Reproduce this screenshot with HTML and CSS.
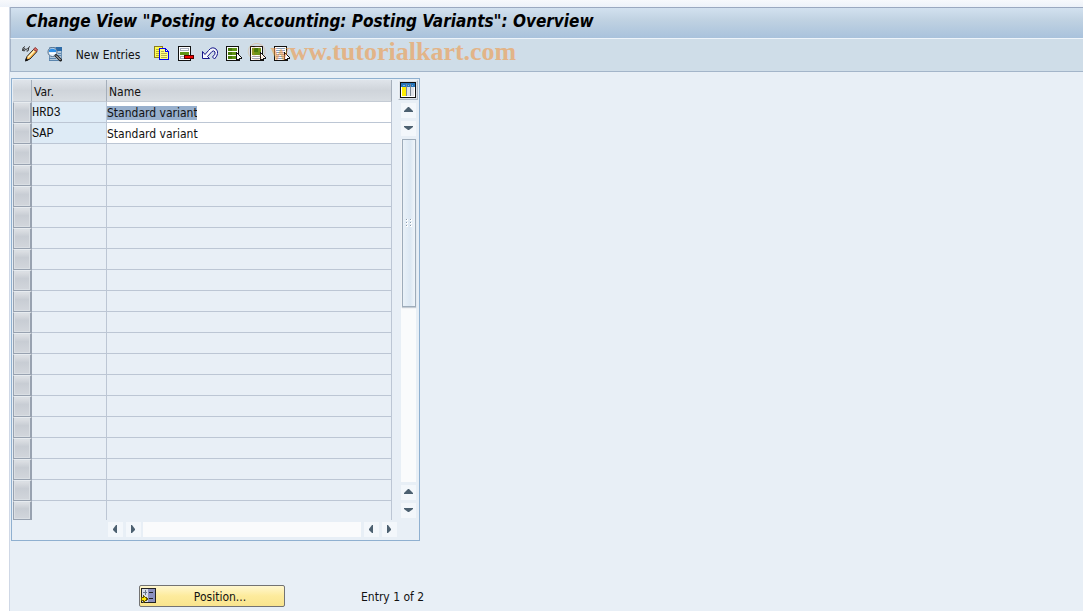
FILE: index.html
```html
<!DOCTYPE html>
<html lang="en">
<head>
    <meta charset="UTF-8">
    <meta name="viewport" content="width=device-width, initial-scale=1.0">
    <title>Change View "Posting to Accounting: Posting Variants": Overview</title>
    <link rel="stylesheet" href="styles.css">
</head>
<body>
    <div class="window">
        <header class="title-bar">
            <h1>Change View "Posting to Accounting: Posting Variants": Overview</h1>
        </header>

        <nav class="toolbar">
            <button class="tool" aria-label="Display / Change">
                <svg viewBox="0 0 16 16">
                    <path d="M.5 4.500Q.5 1 3 .5M.5 4.500Q2 1.500 3.500 3Q3 6 .5 4.500M4 3.500Q5.500 2 6.500 3Q6.500 6 4.500 5M6.500 3Q6 1 8 .5" fill="none" stroke="#333"/>
                    <path d="M3.500 14.500L5 10.500L12 3L15 5.500L8 13Z" fill="#ffb84a" stroke="#222"/>
                    <path d="M6 11.500L12.500 4.500" stroke="#fff6c8" stroke-width="1.500"/>
                    <path d="M11.500 3.500L13 1.500L15.500 3.500L14.500 5.500Z" fill="#e8736e" stroke="#8c3a36"/>
                    <path d="M3 15.500L4 12L6.500 14.500Z" fill="#111"/>
                </svg>
            </button>
            <button class="tool" aria-label="Details">
                <svg viewBox="0 0 16 16">
                    <path d="M3.500 1.500H15.500V14.500H3.500Z" fill="#b4c8da" stroke="#6d92b5"/>
                    <path d="M10 1H16V5H10Z" fill="#2e6ca8"/>
                    <path d="M12 7.500H15M12 9.500H15M3 12.500H10M3 14.500H12" stroke="#5c86ae"/>
                    <circle cx="6.500" cy="6" r="4.500" fill="#e4f1fc" stroke="#4f6b88"/>
                    <path d="M3 4Q6 1 10 4V6H3Z" fill="#2f8fe6"/>
                    <path d="M4 7.500H9" stroke="#fff"/>
                    <path d="M10 9.500L14.500 14" stroke="#222" stroke-width="3" stroke-linecap="round"/>
                    <path d="M10 9.500L14.500 14" stroke="#e8edf2"/>
                </svg>
            </button>
            <button class="new-entries">New Entries</button>
            <button class="tool" aria-label="Copy As">
                <svg viewBox="0 0 16 16" shape-rendering="crispEdges">
                    <path d="M.5 .5H8.500V11.500H.5Z" fill="#ffff50" stroke="#8a7a20"/>
                    <path d="M2 3.500H5M2 5.500H5M2 7.500H5M2 9.500H5" stroke="#b9a83a"/>
                    <path d="M5.500 2.500H11.500L14.500 5.500V13.500H5.500Z" fill="#ffff80" stroke="#0000f0"/>
                    <path d="M11.500 2.500V5.500H14.500Z" fill="#fff" stroke="#0000f0"/>
                    <path d="M7 5.500H10M7 7.500H13M7 9.500H13M7 11.500H13" stroke="#b9b050"/>
                </svg>
            </button>
            <button class="tool" aria-label="Delete">
                <svg viewBox="0 0 16 16" shape-rendering="crispEdges">
                    <path d="M.5 .5H12.500V14.500H.5Z" fill="#fff" stroke="#111"/>
                    <path d="M2 2H11V5H2ZM2 10H11V13H2Z" fill="#a7adbc"/>
                    <path d="M3 3H10V4H3ZM3 11H10V12H3Z" fill="#fff"/>
                    <path d="M2 6H11V9H2Z" fill="#5f9416"/>
                    <path d="M6.500 9.500H15.500V12.500H6.500Z" fill="#f00000" stroke="#500"/>
                    <path d="M7 10H15V12H7Z" fill="#f00000"/>
                </svg>
            </button>
            <button class="tool" aria-label="Undo Change">
                <svg viewBox="0 0 16 16">
                    <path d="M.5 5.500V12.500H7.500L5.500 10.500L10 5.500Q12 4 13 6Q14 8 10.500 11L12.500 13Q18 7 14 3Q10 0 6.500 4.500L3 8.500Z" fill="#f5f7fc" stroke="#16168a"/>
                </svg>
            </button>
            <button class="tool" aria-label="Select All">
                <svg viewBox="0 0 16 16" shape-rendering="crispEdges">
                    <path d="M.5 .5H12.500V14.500H.5Z" fill="#fff" stroke="#111"/>
                    <path d="M2 2H11V5H2ZM2 6H11V9H2ZM2 10H11V13H2Z" fill="#5f9416"/>
                    <path d="M2 2H6V5H2ZM2 6H6V9H2ZM2 10H6V13H2Z" fill="#47790a"/>
                    <path d="M10.500 6.500V13.500H12.500V14.500H13.500V12.500H15.500V11.500L14.500 10.500Z" fill="#fff" stroke="#111"/>
                </svg>
            </button>
            <button class="tool" aria-label="Select Block">
                <svg viewBox="0 0 16 16" shape-rendering="crispEdges">
                    <path d="M.5 .5H12.500V14.500H.5Z" fill="#fff" stroke="#111"/>
                    <path d="M2 2H11V9H2Z" fill="#6d9416"/>
                    <path d="M4 2H8V6H4Z" fill="#47790a"/>
                    <path d="M2 10.500H10M2 12.500H10" stroke="#9aa6b8"/>
                    <path d="M10.500 6.500V13.500H12.500V14.500H13.500V12.500H15.500V11.500L14.500 10.500Z" fill="#fff" stroke="#111"/>
                </svg>
            </button>
            <button class="tool" aria-label="Deselect All">
                <svg viewBox="0 0 16 16" shape-rendering="crispEdges">
                    <path d="M.5 .5H12.500V14.500H.5Z" fill="#fff" stroke="#111"/>
                    <path d="M2 2.500H11M2 4.500H11M2 6.500H11M2 8.500H11M2 10.500H11M2 12.500H11" stroke="#8ba2bb"/>
                    <path d="M10.500 6.500V13.500H12.500V14.500H13.500V12.500H15.500V11.500L14.500 10.500Z" fill="#fff" stroke="#111"/>
                </svg>
            </button>
            <div class="watermark"><span class="mark">©</span>www.tutorialkart.com</div>
        </nav>

        <main>
            <section class="table-control">
                <div class="table-area">
                    <table>
                        <thead>
                            <tr><th class="selector"></th><th class="var">Var.</th><th>Name</th></tr>
                        </thead>
                        <tbody id="rows">
                            <tr class="filled">
                                <td class="selector"></td>
                                <td class="var">HRD3</td>
                                <td><input class="selected" type="text" value="Standard variant" aria-label="Name HRD3"></td>
                            </tr>
                            <tr class="filled">
                                <td class="selector"></td>
                                <td class="var">SAP</td>
                                <td><input type="text" value="Standard variant" aria-label="Name SAP"></td>
                            </tr>
                        </tbody>
                    </table>
                    <div class="v-scroll">
                        <button class="configure" aria-label="Configuration">
                            <svg viewBox="0 0 16 16" shape-rendering="crispEdges">
                                <path d="M.5 .5H15.500V15.500H.5Z" fill="#fff" stroke="#111"/>
                                <path d="M1 1H15V5H1Z" fill="#2874b8"/>
                                <path d="M2 5H6V14H2Z" fill="#ffee00"/>
                                <path d="M7 5H10V14H7ZM11 5H14V14H11Z" fill="#dfe2e7"/>
                                <path d="M6.500 2V14M10.500 2V14" stroke="#7b8795"/>
                                <path d="M3 3.500H5M8 3.500H9M12 3.500H13" stroke="#79b5e8"/>
                            </svg>
                        </button>
                        <button class="arrow" aria-label="Up"><svg viewBox="0 0 15 15"><path d="M3 9V8L7 4H8L12 8V9Z"/></svg></button>
                        <button class="arrow" aria-label="Down"><svg viewBox="0 0 15 15"><path d="M3 5V6L7 9H8L12 6V5Z"/></svg></button>
                        <div class="track">
                            <div class="thumb">
                                <svg class="grip" viewBox="0 0 6 8" shape-rendering="crispEdges">
                                    <path d="M0 0H2V2H0ZM4 0H6V2H4ZM0 3H2V5H0ZM4 3H6V5H4ZM0 6H2V8H0ZM4 6H6V8H4Z" fill="#fff"/>
                                    <path d="M0 0H1V1H0ZM4 0H5V1H4ZM0 3H1V4H0ZM4 3H5V4H4ZM0 6H1V7H0ZM4 6H5V7H4Z" fill="#8d9dad"/>
                                </svg>
                            </div>
                        </div>
                        <button class="arrow" aria-label="Page up"><svg viewBox="0 0 15 15"><path d="M3 9V8L7 4H8L12 8V9Z"/></svg></button>
                        <button class="arrow" aria-label="Page down"><svg viewBox="0 0 15 15"><path d="M3 5V6L7 9H8L12 6V5Z"/></svg></button>
                    </div>
                </div>
                <div class="h-scroll">
                    <button class="arrow" aria-label="Left"><svg viewBox="0 0 15 15"><path d="M9 3H8L5 7V8L8 11H9Z"/></svg></button>
                    <button class="arrow" aria-label="Right"><svg viewBox="0 0 15 15"><path d="M5 3H6L9 7V8L6 11H5Z"/></svg></button>
                    <div class="track"></div>
                    <button class="arrow" aria-label="Page left"><svg viewBox="0 0 15 15"><path d="M9 3H8L5 7V8L8 11H9Z"/></svg></button>
                    <button class="arrow" aria-label="Page right"><svg viewBox="0 0 15 15"><path d="M5 3H6L9 7V8L6 11H5Z"/></svg></button>
                </div>
            </section>

            <footer>
                <button class="position">
                    <svg viewBox="0 0 16 16" shape-rendering="crispEdges">
                        <path d="M.5 .5H14.500V14.500H.5Z" fill="#d8dde8" stroke="#222"/>
                        <path d="M7 1H14V14H7Z" fill="#8c90c0"/>
                        <path d="M8 4.500H12M8 10.500H12" stroke="#222"/>
                        <path d="M2 4.500H6M4.500 2V7" stroke="#68758a"/>
                        <path d="M0 9.500H2.500V7.500L6.500 11L2.500 14.500V12.500H0Z" fill="#ffe800" stroke="#6b5a00"/>
                    </svg>
                    <span>Position...</span>
                </button>
                <span class="entry">Entry 1 of 2</span>
            </footer>
        </main>
    </div>

    <script>
        // fill the table up with empty rows
        const rows = document.getElementById('rows');
        while (rows.rows.length < 20) {
            const row = rows.insertRow();
            row.insertCell().className = 'selector';
            row.insertCell().className = 'var';
            row.insertCell();
        }
    </script>
</body>
</html>
```
FILE: styles.css
```css
* {
    margin: 0;
    padding: 0;
    box-sizing: border-box;
}

body {
    min-height: 100vh;
    padding: 7px 0 0 9px;
    display: flex;
    background: linear-gradient(#f7f9fc, #edf2f9 7px, transparent 7px), #fff;
    font-family: "DejaVu Sans Condensed", "DejaVu Sans", sans-serif;
    font-size: 12px;
    color: #111;
}

button,
input {
    font: inherit;
    color: inherit;
    border: none;
    background: none;
}

svg {
    display: block;
    width: 16px;
    height: 16px;
}

.window {
    flex: 1;
    border-left: 1px solid #cfd8e6;
    background: #e8eff6;
}

.title-bar {
    height: 31px;
    padding-left: 15px;
    display: flex;
    align-items: center;
    border-top: 1px solid #9ba9c0;
    border-left: 1px solid #a5b4c7;
    background: linear-gradient(#d2e1ef, #c0d2e2 40%, #a9c2dc);
}

h1 {
    font-size: 17px;
    line-height: 20px;
    font-style: italic;
    font-weight: bold;
    white-space: nowrap;
    color: #000;
    padding-bottom: 4px;
}

.toolbar {
    position: relative;
    height: 34px;
    padding-left: 7px;
    display: flex;
    align-items: center;
    background: #cfdde8;
    border-top: 1px solid #eef4fa;
    border-bottom: 1px solid #a3b5c9;
    border-left: 1px solid #a5b4c7;
}

.tool {
    width: 24px;
    height: 26px;
    padding: 4px 4px 6px;
}

.new-entries {
    width: 84px;
    height: 24px;
}

/* lies over the last icons */
.watermark {
    position: absolute;
    left: 236px;
    top: -3px;
    font-family: "Liberation Serif", serif;
    font-size: 26px;
    line-height: 32px;
    font-weight: bold;
    color: #f09a49;
    opacity: 0.6;
    pointer-events: none;
}

.mark {
    margin-right: 4px;
    font-weight: normal;
    opacity: 0.5;
}

main {
    padding: 6px 1px 4px;
}

.table-control {
    width: 409px;
    padding: 1px 1px 3px;
    border: 1px solid #8fb0d0;
}

.table-area {
    display: flex;
    gap: 6px;
}

table {
    width: 380px;
    table-layout: fixed;
    border-collapse: separate;
    border-spacing: 0;
}

th {
    height: 22px;
    padding: 2px 0 0 2px;
    text-align: left;
    font-weight: normal;
    border-right: 1px solid #a5afbb;
    border-bottom: 1px solid #c4cbd4;
    background: linear-gradient(#dfe4ea, #cfd4da 50%, #d8dde2);
}

td {
    height: 21px;
    padding-top: 2px;
    border-right: 1px solid #bcc6d4;
    border-bottom: 1px solid #bcc6d4;
}

th.selector {
    width: 19px;
}

th.var {
    width: 75px;
}

td.selector {
    border: 1px solid #98a2b0;
    border-top-color: #e8ecf0;
    border-right-width: 2px;
    background: linear-gradient(#dfe2e6, #c8cdd4 40%, #d2d6dc);
    box-shadow: inset 0 0 0 1px #dadfe4;
}

td.var {
    font-family: "Liberation Mono", monospace;
}

.filled .var {
    background: #deebf6;
}

.filled td:last-child {
    background: #fff;
}

tr:last-child td {
    height: 19px;
}

tr:last-child td:not(.selector) {
    border-bottom: none;
}

td input {
    display: block;
    width: 100%;
    height: 14px;
    outline: none;
}

td .selected {
    width: 90px;
    background: #98b0cd;
}

.v-scroll {
    display: flex;
    flex-direction: column;
    align-items: center;
    gap: 3px;
    padding-bottom: 2px;
}

.configure {
    width: 20px;
    height: 20px;
    padding: 1px;
    background: #dce2e8;
    border: 1px solid #aeb8c4;
    border-top-color: #edf1f5;
    border-left-color: #edf1f5;
}

.arrow {
    width: 15px;
    height: 15px;
    background: #f3f7fb;
}

.arrow svg {
    width: 15px;
    height: 15px;
    fill: #4c6070;
}

.track {
    flex: 1;
    background: #fafbfc;
}

.v-scroll .track {
    width: 15px;
}

.thumb {
    height: 168px;
    margin-left: 1px;
    display: flex;
    align-items: center;
    justify-content: center;
    border: 1px solid #9eacba;
    background: linear-gradient(to right, #eaf2f9, #dce8f3 60%, #f0f5fa);
    box-shadow: 0 1px 1px #c5ccd4;
}

.grip {
    width: 6px;
    height: 8px;
}

.h-scroll {
    width: 289px;
    margin: 2px 0 0 95px;
    display: flex;
    gap: 3px;
}

.h-scroll .track {
    margin-left: -1px;
}

footer {
    margin-top: 44px;
    padding-left: 128px;
    display: flex;
    align-items: center;
    gap: 76px;
}

.position {
    width: 146px;
    height: 22px;
    padding: 0 1px;
    display: flex;
    align-items: center;
    border: 1px solid #737373;
    border-radius: 2px;
    background: linear-gradient(#fff7cf, #fdeb9c 50%, #f9e48d);
}

.position span {
    flex: 1;
    padding-top: 2px;
    text-align: center;
}

.entry {
    padding-top: 2px;
}
```
